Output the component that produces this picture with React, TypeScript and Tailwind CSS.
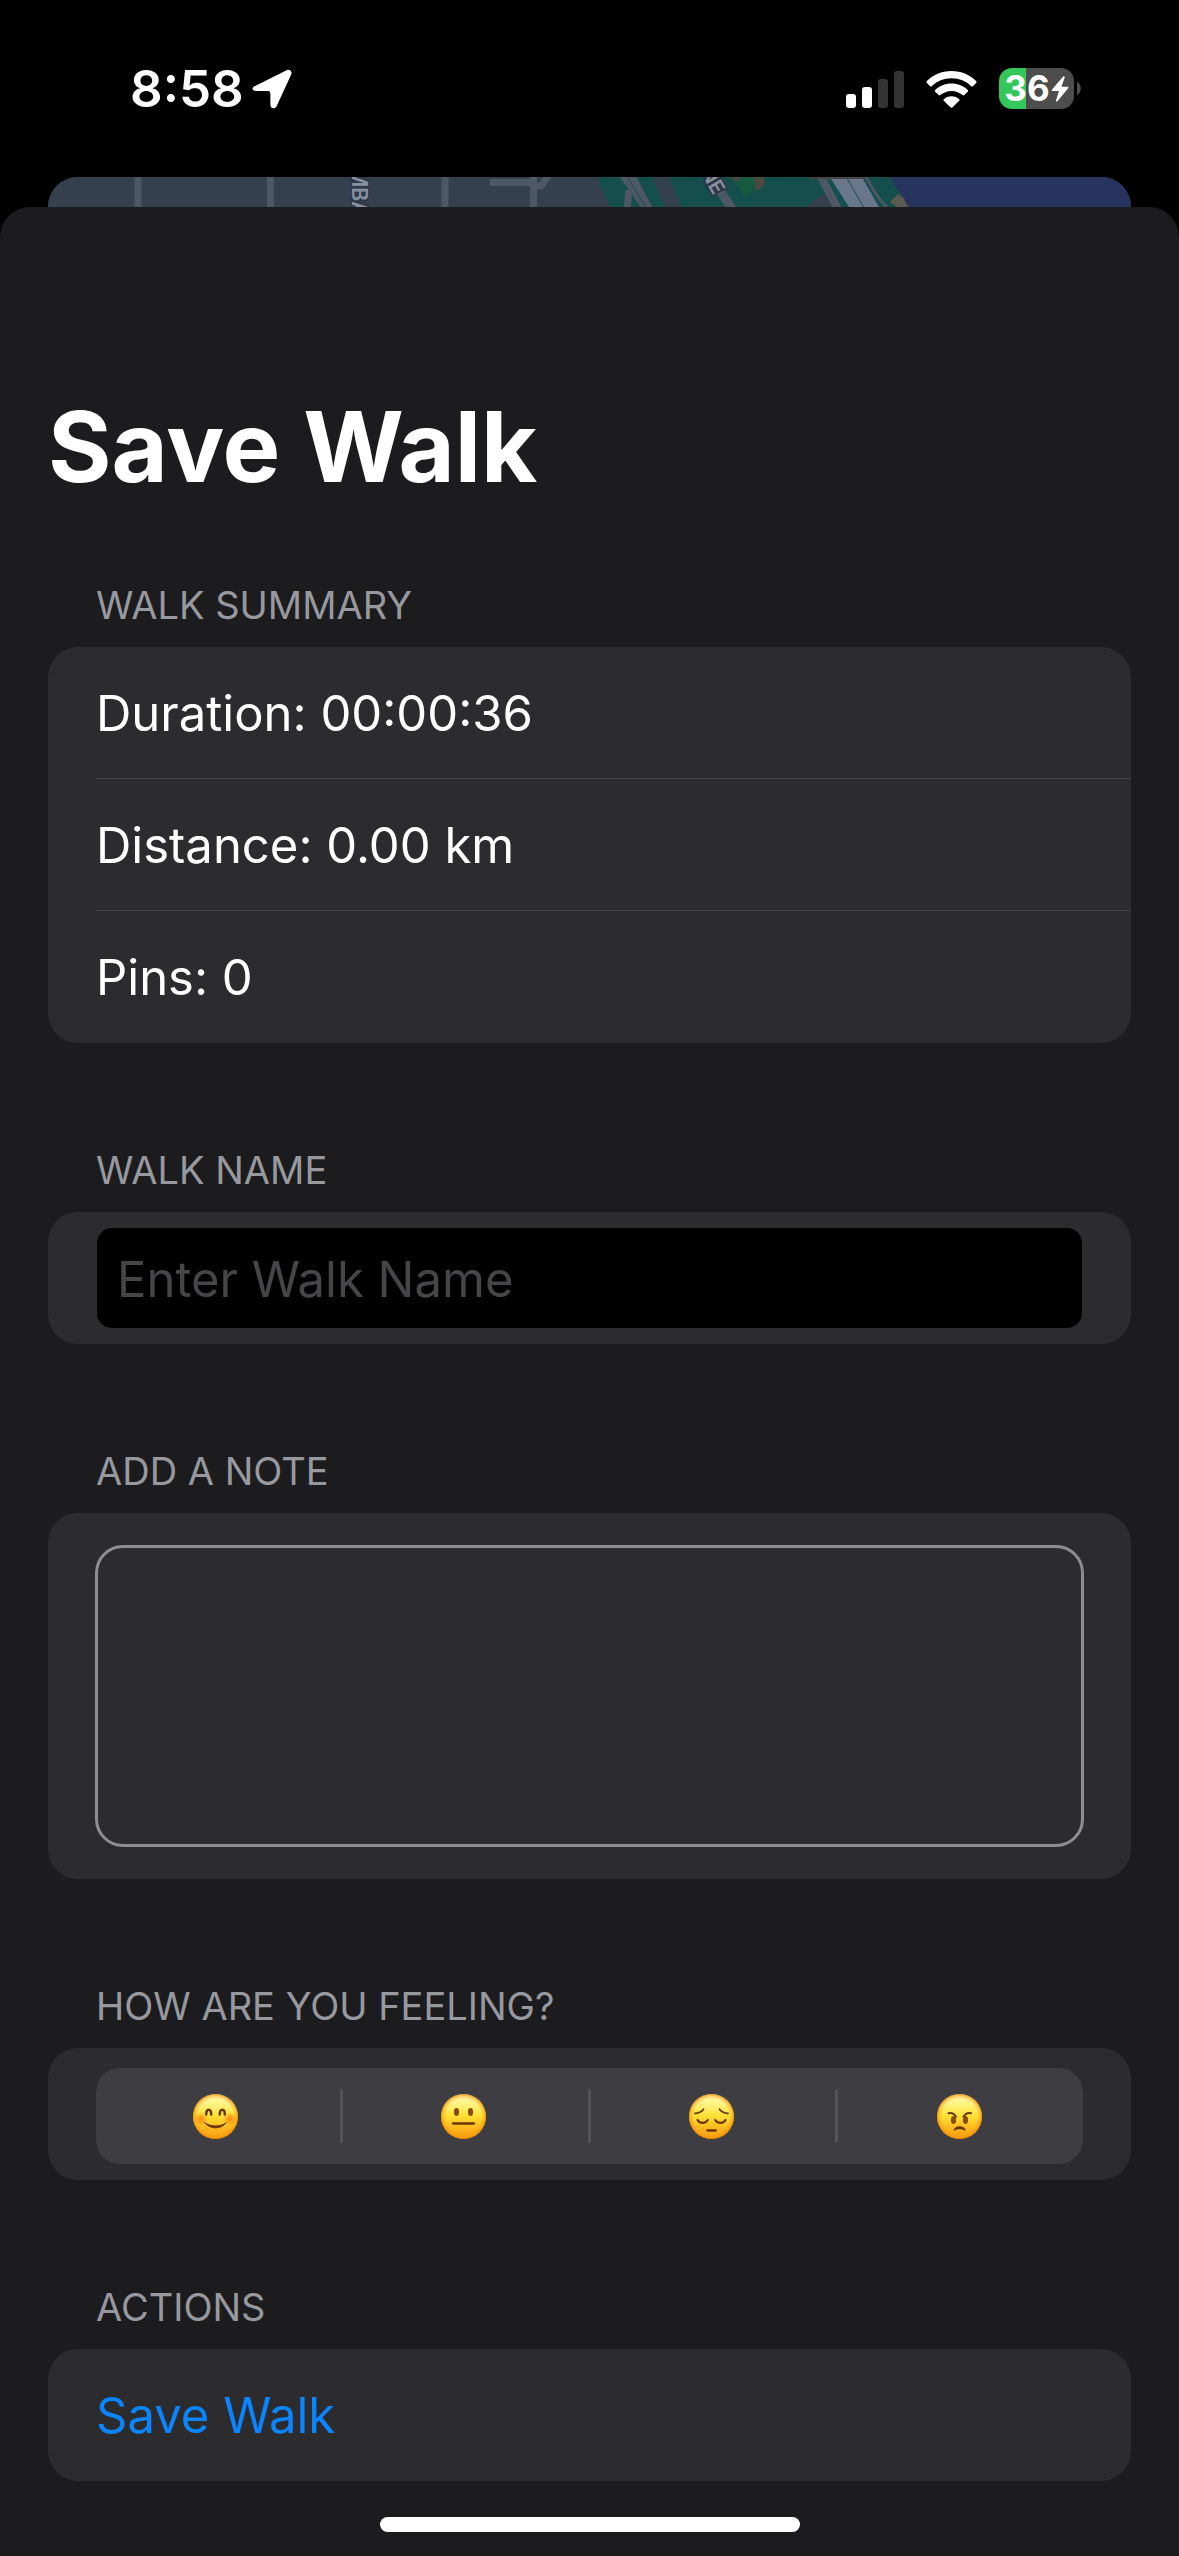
import { useState, type ReactNode } from "react";

const INK = "#6b3607";

function StatusBar() {
  return (
    <header className="flex h-[177px] items-center justify-between pr-[98px] pl-[130px]">
      <div className="flex items-center gap-2">
        <span className="text-[51px] leading-[60px] font-semibold">8:58</span>
        <svg className="h-10 w-10" viewBox="0 0 40 40" fill="#fff" aria-label="Location in use">
          <path d="M2.6 17.2 34.6 1.2C37.6-.3 40.6 2.4 39.2 5.6L24.6 37.2C23.2 40.4 18.4 39.8 18.4 36V24.400Q18.400 22 16 22H4C0.200 22-.8 18.900 2.600 17.200Z" />
        </svg>
      </div>
      <div className="flex items-center gap-[22px]">
        <svg className="h-[38px] w-[58px]" viewBox="0 0 58 38" aria-label="Cellular signal">
          <rect x="0" y="24" width="10" height="14" rx="3" fill="#fff" />
          <rect x="16" y="17" width="10" height="21" rx="3" fill="#fff" />
          <rect x="32" y="9" width="10" height="29" rx="3" fill="#333" />
          <rect x="48" y="1" width="10" height="37" rx="3" fill="#333" />
        </svg>
        <svg className="h-[38px] w-[51px]" viewBox="0 0 51 38" fill="#fff" aria-label="Wi-Fi">
          <path d="M25.500 1C35.400 1 44.200 4.900 50.300 11.200Q51 12 50.300 12.800L46.900 16.200Q46.100 16.900 45.300 16.200C40.100 11.300 33.200 8.300 25.500 8.300S10.900 11.300 5.700 16.200Q4.900 16.900 4.100 16.200L.7 12.800Q0 12 .7 11.200C6.800 4.900 15.600 1 25.500 1Z" />
          <path d="M25.500 13.600C31.900 13.600 37.600 16.100 41.800 20.100Q42.600 20.900 41.800 21.700L38.300 25.100Q37.500 25.800 36.700 25.100C33.700 22.500 29.800 20.900 25.500 20.900S17.300 22.500 14.300 25.100Q13.500 25.800 12.700 25.100L9.200 21.700Q8.400 20.900 9.200 20.100C13.400 16.100 19.100 13.600 25.500 13.600Z" />
          <path d="M25.500 26.300C28.500 26.300 31.200 27.400 33.200 29.200Q34 30 33.200 30.800L26.300 37.500Q25.500 38.200 24.700 37.500L17.800 30.800Q17 30 17.800 29.200C19.800 27.400 22.500 26.300 25.500 26.300Z" />
        </svg>
        <div className="flex items-center gap-[3px]">
          <div className="flex h-[41px] w-[75px] items-center justify-center gap-px rounded-[13px] bg-[linear-gradient(90deg,#34c759_36%,#4d4d4d_36%)]">
            <span className="text-[35px] leading-[41px] font-bold">36</span>
            <svg className="h-[26px] w-[18px]" viewBox="0 0 18 26" fill="#fff" aria-label="Charging">
              <path d="M12 .8 1 13.600Q.2 14.900 1.700 15H8L5 24.300C4.700 25.600 5.800 26 6.600 25.100L17.200 12.200Q18 10.800 16.400 10.700H10.400L13.600 1.700C14 .3 12.800-.1 12 .8Z" />
            </svg>
          </div>
          <svg className="h-[13px] w-1" viewBox="0 0 4 13">
            <path d="M0 0C5 2 5 11 0 13Z" fill="#4d4d4d" />
          </svg>
        </div>
      </div>
    </header>
  );
}

function MapPeek() {
  return (
    <div className="mx-12 h-[30px] overflow-hidden rounded-t-[30px] bg-[#35404e]">
      <svg className="block h-full w-full" viewBox="0 0 1083 30" preserveAspectRatio="xMidYMin slice" aria-hidden="true">
        <rect width="1083" height="30" fill="#35404e" />
        <g stroke="#4d5766" strokeWidth="7" fill="none">
          <path d="M90 0V30M222.500 0V30M397 0V30M485.500 0V30M442 5.500H486M488 9H493L501 -2" />
        </g>
        <path d="M549 0H842L860 30H562Z" fill="#154f4d" />
        <path d="M604 0H620L634 30H617Z" fill="#35404e" />
        <path d="M682 0H716L717 8 709 14 700 10 690 7Z" fill="#4a4a41" />
        <path d="M694 0H705L708 12 697 20 691 10 687 6Z" fill="#165b40" />
        <g stroke="#4d5766" fill="none">
          <path d="M574 -3 599 33M583 -3 602 33M581 13 579 32" strokeWidth="7" />
          <path d="M579 -1 598 31" stroke="#154f4d" strokeWidth="1" />
          <path d="M671 12 684 32" strokeWidth="9" />
        </g>
        <path d="M758 30 767 23 776 16 785 30Z" fill="#35404e" />
        <path d="M773 0 791 34" stroke="#4d5766" strokeWidth="8" />
        <path d="M783 2H799L815 30H801Z" fill="#69778d" />
        <path d="M800 2H815L831 30H816Z" fill="#69778d" />
        <path d="M818 0C824 10 829 22 839 30" stroke="#4d5766" strokeWidth="3" fill="none" />
        <rect x="763" width="54" height="2" fill="#454545" />
        <path d="M842 0H1083V30H860L855 18 849 12Z" fill="#273460" />
        <path d="M842 25 850 17 856 22 860 30H849Z" fill="#5b5a50" />
        <g fontFamily="Inter, sans-serif" fontWeight="600" fill="#8790a1" stroke="#2e3947" strokeWidth="4" paintOrder="stroke">
          <text transform="translate(304 -9) rotate(90)" fontSize="21">MBA</text>
          <text transform="translate(652 -5) rotate(60)" fontSize="20">NE</text>
        </g>
      </svg>
    </div>
  );
}

function Section({ title, htmlFor, children }: { title: string; htmlFor?: string; children: ReactNode }) {
  const text = htmlFor ? <label htmlFor={htmlFor}>{title}</label> : title;
  return (
    <section>
      <h2 className="px-12 pb-[18px] text-[38px] leading-[48px] text-[#98989f] uppercase">{text}</h2>
      <div className="overflow-hidden rounded-[30px] bg-[#2c2c2e]">{children}</div>
    </section>
  );
}

function Face({ blush, children }: { blush?: boolean; children: ReactNode }) {
  return (
    <svg className="h-[45px] w-[45px]" viewBox="0 0 45 45" aria-hidden="true">
      <circle cx="22.500" cy="22.500" r="22.500" fill="url(#face-base)" />
      <circle cx="22.500" cy="22.500" r="22.500" fill="url(#face-rim)" />
      {blush && (
        <>
          <circle cx="8" cy="25" r="7" fill="url(#face-blush)" />
          <circle cx="37" cy="25" r="7" fill="url(#face-blush)" />
        </>
      )}
      <g stroke={INK} strokeLinecap="round" strokeLinejoin="round" fill="none">
        {children}
      </g>
    </svg>
  );
}

function FaceGradients() {
  return (
    <svg className="block h-0 w-0" aria-hidden="true">
      <defs>
        <linearGradient id="face-base" x1="0" y1="0" x2="0" y2="1">
          <stop offset="0" stopColor="#fff6b0" />
          <stop offset="0.2" stopColor="#fff48a" />
          <stop offset="0.48" stopColor="#ffe234" />
          <stop offset="0.75" stopColor="#fdb91f" />
          <stop offset="1" stopColor="#f79a0f" />
        </linearGradient>
        <radialGradient id="face-rim" cx="0.5" cy="0.5" r="0.5">
          <stop offset="0.78" stopColor="#f59a0c" stopOpacity="0" />
          <stop offset="0.93" stopColor="#f59a0c" stopOpacity="0.5" />
          <stop offset="1" stopColor="#e07e06" stopOpacity="0.9" />
        </radialGradient>
        <radialGradient id="face-blush">
          <stop offset="0" stopColor="#ff6a0a" stopOpacity="0.75" />
          <stop offset="1" stopColor="#ff6a0a" stopOpacity="0" />
        </radialGradient>
      </defs>
    </svg>
  );
}

const feelings = [
  {
    name: "Happy",
    face: (
      <Face blush>
        <path d="M13.200 20.500C13.200 14 18.200 14 18.200 20.500M26.800 20.500C26.800 14 31.800 14 31.800 20.500" strokeWidth="2.500" />
        <path d="M11.800 28.800C17 35.600 28 35.600 33.200 28.800C28 33 17 33 11.800 28.800Z" fill={INK} strokeWidth="1" />
      </Face>
    ),
  },
  {
    name: "Neutral",
    face: (
      <Face>
        <ellipse cx="15.500" cy="18" rx="2.600" ry="4" fill="#8a4b08" stroke="none" />
        <ellipse cx="29.500" cy="18" rx="2.600" ry="4" fill="#8a4b08" stroke="none" />
        <path d="M12.200 29.500H32.800" strokeWidth="2.500" />
      </Face>
    ),
  },
  {
    name: "Sad",
    face: (
      <Face>
        <path d="M6 19.500C10 19 13 17.500 14.500 15.200M39 19.500C35 19 32 17.500 30.500 15.200" strokeWidth="1.800" />
        <path d="M8.500 26C10.500 29.800 16.500 29.800 18.800 26M26.200 26C28.500 29.800 34.500 29.800 36.500 26" strokeWidth="2.200" />
        <path d="M18.600 36.500H26.600" strokeWidth="2.600" />
      </Face>
    ),
  },
  {
    name: "Angry",
    face: (
      <Face>
        <path d="M11.500 19.200C14.500 18.700 17.500 20 19 22.800M34 19.200C31 18.700 28 20 26.500 22.800" strokeWidth="2" />
        <ellipse cx="16.500" cy="26" rx="2.600" ry="4" fill="#8a4b08" stroke="none" />
        <ellipse cx="28.500" cy="26" rx="2.600" ry="4" fill="#8a4b08" stroke="none" />
        <path d="M17.200 36C19.500 32 25.500 32 28 36C25.500 34 19.500 34 17.200 36Z" fill={INK} strokeWidth="1.400" />
      </Face>
    ),
  },
];

const summary = ["Duration: 00:00:36", "Distance: 0.00 km", "Pins: 0"];

export default function App() {
  const [feeling, setFeeling] = useState("");
  return (
    <div className="flex min-h-screen flex-col bg-black font-['Inter',sans-serif] text-white">
      <StatusBar />
      <MapPeek />
      <main className="flex flex-1 flex-col rounded-t-[30px] bg-[#1c1c1e] px-12 pt-[180px]">
        <h1 className="text-[97px] leading-[120px] font-bold">Save Walk</h1>
        <form className="flex flex-col gap-[103px] pt-[74px]" onSubmit={(e) => e.preventDefault()}>
          <Section title="Walk Summary">
            <ul className="pl-12 text-[49px] leading-[60px]">
              {summary.map((line) => (
                <li key={line} className="flex h-[132px] items-center border-b border-[#464649] pt-0.5 last:border-b-0">
                  {line}
                </li>
              ))}
            </ul>
          </Section>

          <Section title="Walk Name" htmlFor="walk-name">
            <div className="flex px-[49px] py-4">
              <input
                id="walk-name"
                type="text"
                placeholder="Enter Walk Name"
                className="h-[100px] w-full rounded-[15px] bg-black px-5 pt-0.5 text-[49px] outline-none placeholder:text-[#464649]"
              />
            </div>
          </Section>

          <Section title="Add a Note" htmlFor="walk-note">
            <div className="flex px-[47px] py-8">
              <textarea
                id="walk-note"
                className="h-[302px] w-full resize-none rounded-[28px] border-3 border-[#8e8e90] bg-transparent p-4 text-[49px] leading-[60px] outline-none"
              />
            </div>
          </Section>

          <Section title="How are you feeling?">
            <div className="px-12 pt-5 pb-4">
              <FaceGradients />
              <div className="overflow-hidden rounded-[24px] bg-[#3e3d42]">
                <div role="radiogroup" aria-label="How are you feeling?" className="-ml-1 flex h-24">
                  {feelings.map(({ name, face }, i) => (
                    <label
                      key={name}
                      className="relative flex h-full flex-1 items-center justify-center has-checked:bg-[#636366]"
                    >
                      <input
                        type="radio"
                        name="feeling"
                        aria-label={name}
                        className="sr-only"
                        checked={feeling === name}
                        onChange={() => setFeeling(name)}
                      />
                      {face}
                      {i > 0 && <span className="absolute left-0 h-[54px] w-[3px] rounded-full bg-[#545458]" />}
                    </label>
                  ))}
                </div>
              </div>
            </div>
          </Section>

          <Section title="Actions">
            <button type="submit" className="flex h-[132px] w-full items-center px-12 pt-0.5 text-[49px] leading-[60px] text-[#0a84ff]">
              Save Walk
            </button>
          </Section>
        </form>
        <div className="mt-9 mb-6 h-[15px] w-[420px] self-center rounded-full bg-white" />
      </main>
    </div>
  );
}
